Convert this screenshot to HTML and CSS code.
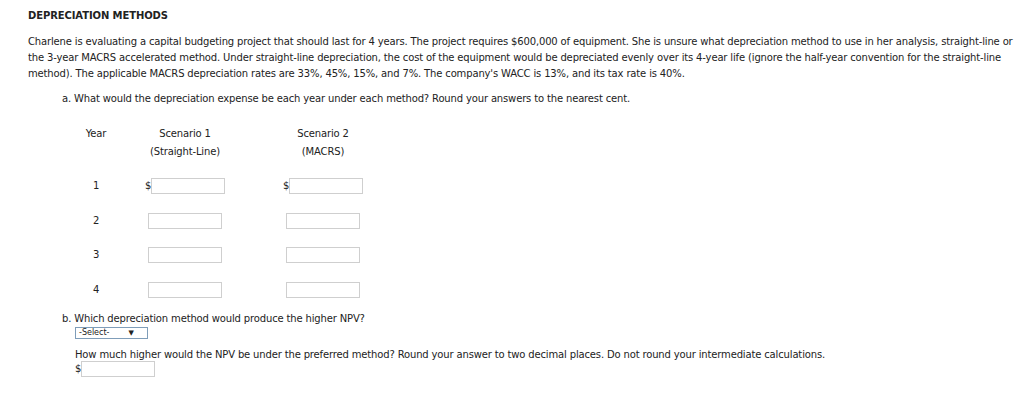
FILE: index.html
```html
<!DOCTYPE html>
<html>
<head>
<meta charset="utf-8">
<link rel="stylesheet" href="styles.css">
</head>
<body>
<div class="page">
  <h1 class="title">DEPRECIATION METHODS</h1>
  <p class="intro">Charlene is evaluating a capital budgeting project that should last for 4 years. The project requires $600,000 of equipment. She is unsure what depreciation method to use in her analysis, straight-line or the 3-year MACRS accelerated method. Under straight-line depreciation, the cost of the equipment would be depreciated evenly over its 4-year life (ignore the half-year convention for the straight-line method). The applicable MACRS depreciation rates are 33%, 45%, 15%, and 7%. The company's WACC is 13%, and its tax rate is 40%.</p>
  <p class="q-a">a. What would the depreciation expense be each year under each method? Round your answers to the nearest cent.</p>

  <div class="grid">
    <div class="head">Year</div>
    <div class="head">Scenario 1<br>(Straight-Line)</div>
    <div class="head">Scenario 2<br>(MACRS)</div>

    <div class="cell">1</div>
    <div class="cell"><span class="cur">$</span><span class="inp"></span></div>
    <div class="cell"><span class="cur">$</span><span class="inp"></span></div>

    <div class="cell">2</div>
    <div class="cell"><span class="inp"></span></div>
    <div class="cell"><span class="inp"></span></div>

    <div class="cell">3</div>
    <div class="cell"><span class="inp"></span></div>
    <div class="cell"><span class="inp"></span></div>

    <div class="cell">4</div>
    <div class="cell"><span class="inp"></span></div>
    <div class="cell"><span class="inp"></span></div>
  </div>

  <p class="q-b">b. Which depreciation method would produce the higher NPV?</p>
  <div class="sub">
    <div class="select"><span class="sel-text">-Select-</span><span class="sel-arrow">▼</span></div>
    <p class="how">How much higher would the NPV be under the preferred method? Round your answer to two decimal places. Do not round your intermediate calculations.</p>
    <div class="answer"><span class="cur">$</span><span class="inp"></span></div>
  </div>
</div>
</body>
</html>
```

FILE: styles.css
```css
html, body {
  margin: 0;
  padding: 0;
  background: #ffffff;
}
body {
  font-family: "DejaVu Sans", Verdana, sans-serif;
  font-size: 10px;
  line-height: 16px;
  letter-spacing: -0.15px;
  color: #222222;
}
.page {
  padding: 8px 4px 0 28px;
}
.title {
  margin: 0;
  font-size: 10px;
  font-weight: bold;
  line-height: 16px;
  letter-spacing: -0.1px;
}
.intro {
  margin: 10px 0 0 0;
}
.q-a {
  margin: 9px 0 0 34px;
}
.grid {
  display: grid;
  grid-template-columns: 68px 110px 166px;
  grid-template-rows: auto repeat(4, 34.5px);
  margin: 18px 0 0 34px;
}
.head {
  text-align: center;
  line-height: 18px;
  padding-bottom: 7.75px;
}
.cell {
  display: flex;
  align-items: center;
  justify-content: center;
}
.cur {
  display: inline-block;
}
.inp {
  display: inline-block;
  box-sizing: border-box;
  width: 74px;
  height: 16px;
  border: 1px solid #cfcfcf;
  background: #fff;
}
.q-b {
  margin: 4px 0 0 34px;
}
.sub {
  margin-left: 47px;
}
.select {
  box-sizing: border-box;
  width: 73px;
  height: 12px;
  border: 1px solid #7f9db9;
  display: flex;
  align-items: center;
  justify-content: space-between;
  padding: 0 13px 0 3px;
  font-size: 8px;
  line-height: 10px;
  letter-spacing: 0;
}
.sel-arrow {
  font-size: 7px;
}
.how {
  margin: 8px 0 0 0;
}
.answer {
  display: flex;
  align-items: center;
  margin-top: -2px;
}
```
